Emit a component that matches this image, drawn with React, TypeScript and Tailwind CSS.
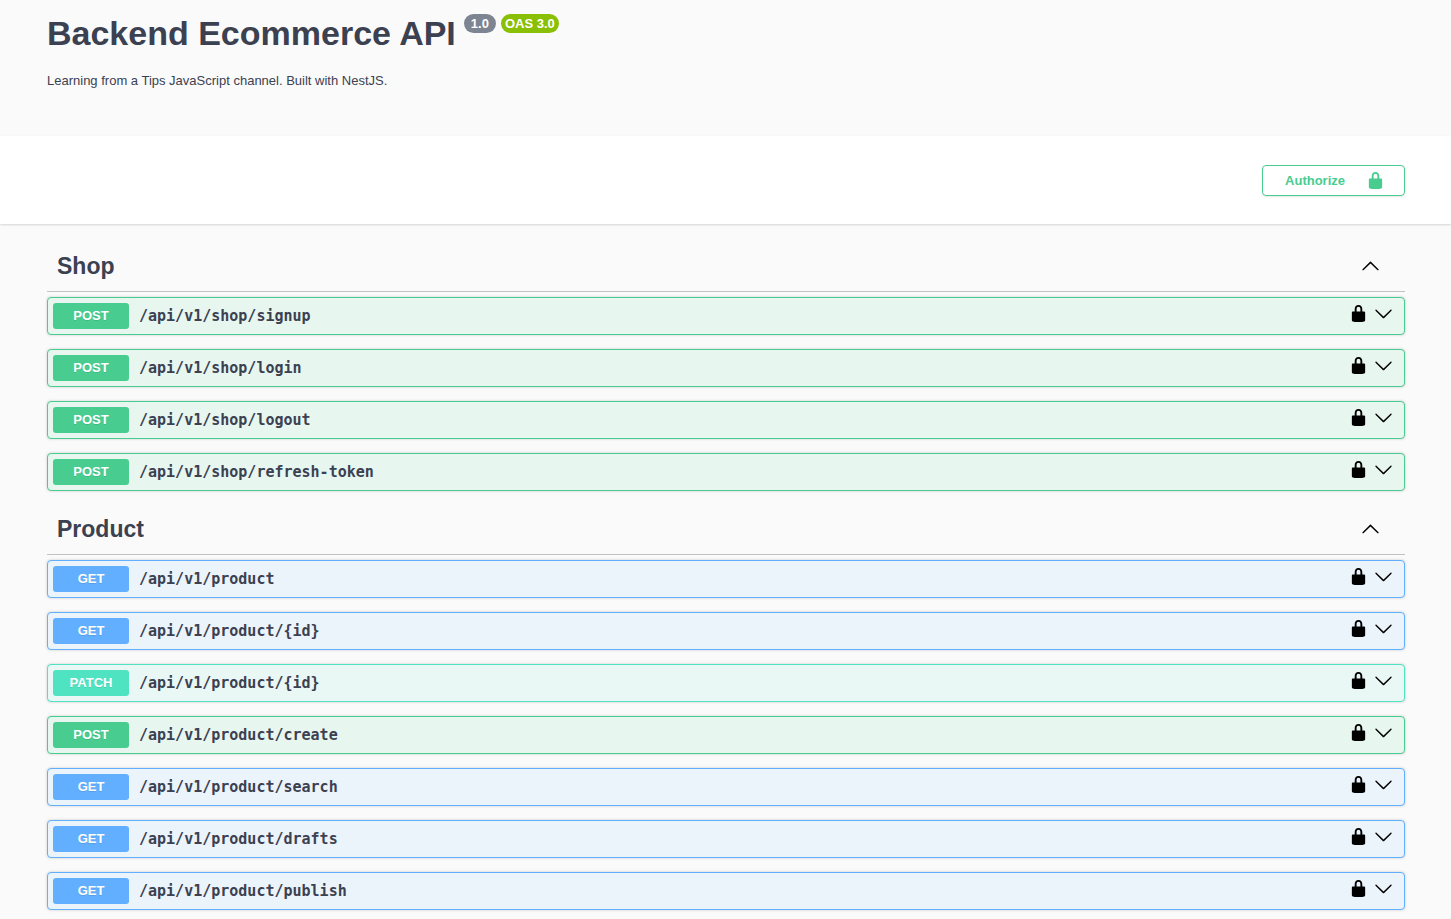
import { useState } from "react";

type Method = "GET" | "POST" | "PATCH";

interface Operation {
  method: Method;
  path: string;
}

interface Tag {
  name: string;
  operations: Operation[];
}

const tags: Tag[] = [
  {
    name: "Shop",
    operations: [
      { method: "POST", path: "/api/v1/shop/signup" },
      { method: "POST", path: "/api/v1/shop/login" },
      { method: "POST", path: "/api/v1/shop/logout" },
      { method: "POST", path: "/api/v1/shop/refresh-token" },
    ],
  },
  {
    name: "Product",
    operations: [
      { method: "GET", path: "/api/v1/product" },
      { method: "GET", path: "/api/v1/product/{id}" },
      { method: "PATCH", path: "/api/v1/product/{id}" },
      { method: "POST", path: "/api/v1/product/create" },
      { method: "GET", path: "/api/v1/product/search" },
      { method: "GET", path: "/api/v1/product/drafts" },
      { method: "GET", path: "/api/v1/product/publish" },
    ],
  },
];

const rowStyles: Record<Method, string> = {
  GET: "border-[#61affe] bg-[#ebf3fb]",
  POST: "border-[#49cc90] bg-[#e8f6f0]",
  PATCH: "border-[#50e3c2] bg-[#e9f8f5]",
};

const methodStyles: Record<Method, string> = {
  GET: "bg-[#61affe]",
  POST: "bg-[#49cc90]",
  PATCH: "bg-[#50e3c2]",
};

function LockIcon() {
  return (
    <svg viewBox="0 0 20 20" className="size-[19px]" fill="currentColor" aria-hidden="true">
      <path d="M15.8 8H14V5.6C14 2.703 12.665 1 10 1 7.334 1 6 2.703 6 5.6V8H4c-.553 0-1 .646-1 1.199V17c0 .549.428 1.139.951 1.307l1.197.387C5.672 18.861 6.55 19 7.1 19h5.8c.549 0 1.428-.139 1.951-.307l1.196-.387c.524-.167.953-.757.953-1.306V9.199C17 8.646 16.352 8 15.8 8zM12 8H8V5.199C8 3.754 8.797 3 10 3c1.203 0 2 .754 2 2.199V8z" />
    </svg>
  );
}

function ArrowIcon({ up = false }: { up?: boolean }) {
  return (
    <svg viewBox="0 0 20 20" className="size-[19px]" fill="currentColor" aria-hidden="true">
      {up ? (
        <path d="M17.418 14.908c.272.268.709.268.979 0s.271-.701 0-.969l-7.908-7.83c-.27-.268-.707-.268-.979 0l-7.908 7.83c-.27.268-.27.701 0 .969s.709.268.979 0L10 7.767l7.418 7.141z" />
      ) : (
        <path d="M17.418 6.109c.272-.268.709-.268.979 0s.271.701 0 .969l-7.908 7.83c-.27.268-.707.268-.979 0l-7.908-7.83c-.27-.268-.27-.701 0-.969s.709-.268.979 0L10 13.25l7.418-7.141z" />
      )}
    </svg>
  );
}

function OperationRow({ method, path }: Operation) {
  return (
    <li
      className={`flex items-center rounded-[4px] border p-[5px] pr-[11px] shadow-[0_0_3px_rgba(0,0,0,0.19)] ${rowStyles[method]}`}
    >
      <button type="button" className="flex flex-1 items-center gap-[10px] text-left">
        <span
          className={`w-[76px] rounded-[3px] text-center text-[13px] leading-[26px] font-bold text-white [text-shadow:0_1px_0_rgba(0,0,0,0.1)] ${methodStyles[method]}`}
        >
          {method}
        </span>
        <span className="font-['DejaVu_Sans_Mono',monospace] text-[15px] leading-5 font-semibold">{path}</span>
      </button>
      <div className="flex items-center gap-[6px] pb-1.5 text-black">
        <button type="button" aria-label={`Authorize ${path}`}>
          <LockIcon />
        </button>
        <button type="button" aria-label={`Expand ${method} ${path}`}>
          <ArrowIcon />
        </button>
      </div>
    </li>
  );
}

function TagSection({ name, operations }: Tag) {
  const [open, setOpen] = useState(true);
  return (
    <section>
      <h3 className="border-b border-[#3b4151]/30">
        <button
          type="button"
          aria-expanded={open}
          onClick={() => setOpen(!open)}
          className="flex h-[49px] w-full items-center justify-between pr-[25px] pl-[10px] text-[23px] font-bold"
        >
          {name}
          <span className="pb-0.5 text-black">
            <ArrowIcon up={open} />
          </span>
        </button>
      </h3>
      {open && (
        <ul className="mt-[5px] flex flex-col gap-[14px]">
          {operations.map((operation) => (
            <OperationRow key={operation.method + operation.path} {...operation} />
          ))}
        </ul>
      )}
    </section>
  );
}

export default function App() {
  return (
    <div className="min-h-screen bg-[#fafafa] font-['Liberation_Sans',Arial,sans-serif] text-[#3b4151]">
      <header className="pt-[13px] pr-[46px] pb-[46px] pl-[47px]">
        <div className="flex items-start gap-2">
          <h1 className="text-[34px] leading-10 font-bold">Backend Ecommerce API</h1>
          <div className="flex gap-[5px] pt-px text-[13px] leading-[19px] font-bold text-white">
            <span className="rounded-full bg-[#7d8492] px-[7px]">1.0</span>
            <span className="rounded-full bg-[#89bf04] px-1">OAS 3.0</span>
          </div>
        </div>
        <p className="mt-[18px] text-[13px] leading-[19px]">
          Learning from a Tips JavaScript channel. Built with NestJS.
        </p>
      </header>

      <div className="flex justify-end bg-white pt-[29px] pr-[46px] pb-7 pl-[47px] shadow-[0_1px_2px_rgba(0,0,0,0.15)]">
        <button
          type="button"
          className="flex items-center gap-[21px] rounded-[4px] border border-[#49cc90] py-[5px] pr-[19px] pl-[22px] text-[13px] leading-[19px] font-bold text-[#49cc90] shadow-[0_1px_2px_rgba(0,0,0,0.1)]"
        >
          Authorize
          <LockIcon />
        </button>
      </div>

      <main className="flex flex-col gap-[14px] pt-[18px] pr-[46px] pl-[47px]">
        {tags.map((tag) => (
          <TagSection key={tag.name} {...tag} />
        ))}
      </main>
    </div>
  );
}
